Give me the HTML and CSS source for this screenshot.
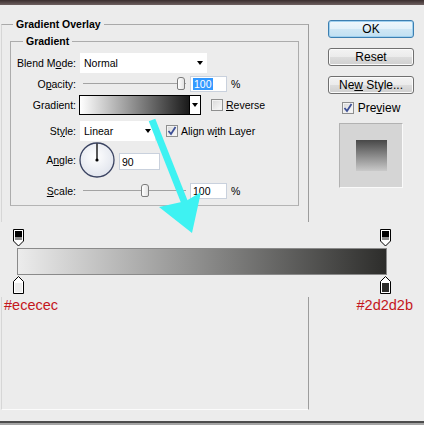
FILE: index.html
```html
<!DOCTYPE html>
<html>
<head>
<meta charset="utf-8">
<link rel="stylesheet" href="styles.css">
</head>
<body>
<div class="titlebar"></div>
<div class="dialog">
  <div class="main">
    <fieldset class="outer">
      <legend>Gradient Overlay</legend>
      <fieldset class="inner">
        <legend>Gradient</legend>
        <div class="row r1">
          <span class="lbl">Blend M<u>o</u>de:</span>
          <div class="select w-blend"><span>Normal</span><i class="caret"></i></div>
        </div>
        <div class="row r2">
          <span class="lbl">O<u>p</u>acity:</span>
          <div class="slider"><div class="thumb" style="margin-left:94px"></div></div>
          <div class="num"><span class="sel">100</span></div>
          <span class="pct">%</span>
        </div>
        <div class="row r3">
          <span class="lbl">Gradient:</span>
          <div class="gradsw"></div>
          <div class="ddbtn"><i class="caret"></i></div>
          <div class="cb cb-rev"></div>
          <span class="cbl"><u>R</u>everse</span>
        </div>
        <div class="row r4">
          <span class="lbl">St<u>y</u>le:</span>
          <div class="select w-style"><span>Linear</span><i class="caret"></i></div>
          <div class="cb cb-align"><svg width="10" height="10" viewBox="0 0 10 10"><path d="M1.5 5 L4 8 L8.5 1" fill="none" stroke="#3c4f96" stroke-width="1.8"/></svg></div>
          <span class="cbl">Align w<u>i</u>th Layer</span>
        </div>
        <div class="row r5">
          <span class="lbl lbl-angle">A<u>n</u>gle:</span>
          <svg class="dial" width="36" height="36" viewBox="0 0 36 36">
            <defs>
              <radialGradient id="dg" cx="45%" cy="40%" r="65%">
                <stop offset="0" stop-color="#ffffff"/>
                <stop offset="1" stop-color="#dfe3ec"/>
              </radialGradient>
            </defs>
            <circle cx="18" cy="18" r="17" fill="url(#dg)" stroke="#3b4462" stroke-width="1.3"/>
            <line x1="18" y1="18" x2="18" y2="1.5" stroke="#000" stroke-width="1.3"/>
            <circle cx="18" cy="18" r="1.6" fill="#000"/>
          </svg>
          <div class="num num-angle">90</div>
        </div>
        <div class="row r6">
          <span class="lbl"><u>S</u>cale:</span>
          <div class="slider"><div class="thumb" style="margin-left:58px"></div></div>
          <div class="num">100</div>
          <span class="pct">%</span>
        </div>
      </fieldset>
    </fieldset>
  </div>
  <div class="side">
    <div class="btn default">OK</div>
    <div class="btn">Reset</div>
    <div class="btn last">Ne<u>w</u> Style...</div>
    <div class="pvrow">
      <div class="cb"><svg width="10" height="10" viewBox="0 0 10 10"><path d="M1.5 5 L4 8 L8.5 1" fill="none" stroke="#3c4f96" stroke-width="1.8"/></svg></div>
      <span class="pvlbl">Pre<u>v</u>iew</span>
    </div>
    <div class="pvbox"><div class="pvsq"></div></div>
  </div>
</div>
<div class="bottombar"></div>

<div class="ge">
  <div class="ge-body">
    <div class="stops">
      <svg width="11" height="18" viewBox="0 0 11 18"><path d="M0.5 0.5 H10.5 V12 L5.5 17 L0.5 12 Z" fill="#fff" stroke="#000"/><rect x="2" y="2" width="7" height="6" fill="#000"/><rect x="2" y="8" width="7" height="3" fill="#8c8c8c"/></svg>
      <svg width="11" height="18" viewBox="0 0 11 18"><path d="M0.5 0.5 H10.5 V12 L5.5 17 L0.5 12 Z" fill="#fff" stroke="#000"/><rect x="2" y="2" width="7" height="6" fill="#000"/><rect x="2" y="8" width="7" height="3" fill="#8c8c8c"/></svg>
    </div>
    <div class="bar"></div>
    <div class="stops bottom">
      <svg width="11" height="18" viewBox="0 0 11 18"><path d="M5.5 0.5 L10.5 5.5 V17.5 H0.5 V5.5 Z" fill="#fff" stroke="#000"/><rect x="2" y="7" width="7" height="9" fill="#ececec"/></svg>
      <svg width="11" height="18" viewBox="0 0 11 18"><path d="M5.5 0.5 L10.5 5.5 V17.5 H0.5 V5.5 Z" fill="#fff" stroke="#000"/><rect x="2" y="7" width="7" height="9" fill="#2d2d2b"/></svg>
    </div>
  </div>
  <div class="ge-labels">
    <span>#ececec</span>
    <span>#2d2d2b</span>
  </div>
</div>

<svg class="arrow" width="424" height="425" viewBox="0 0 424 425">
  <line x1="152" y1="120" x2="186" y2="206" stroke="#3ef2f2" stroke-width="7"/>
  <polygon points="159,207 186,201 201,192 192,233" fill="#3ef2f2"/>
</svg>
</body>
</html>
```

FILE: styles.css
```css
* { box-sizing: border-box; }
html, body { margin: 0; padding: 0; }
body {
  width: 424px;
  height: 425px;
  overflow: hidden;
  position: relative;
  background: #ececec;
  font: 10.5px "Liberation Sans", Arial, sans-serif;
  color: #000;
}
u { text-decoration: underline; }

.titlebar {
  height: 5px;
  background: linear-gradient(#3a2e2e, #6e6060);
}
.dialog { display: flex; height: 416px; }
.main { width: 309px; padding-left: 1px; flex: none; }

fieldset {
  margin: 0;
  padding: 0;
  min-width: 0;
  border: 1px solid #a9a9a9;
}
legend {
  font-weight: bold;
  font-size: 10.5px;
  line-height: 12px;
  padding: 0 3px;
}
.outer {
  margin-top: 13px;
  width: 308px;
  height: 392px;
  border-color: #a9a9a9 #9c9c9c #fbfbfb #d6d6d6;
}
.outer > legend { margin-left: 11px; }
.inner {
  margin: 5px 0 0 8px;
  width: 289px;
  height: 171px;
  border-color: #acacac #acacac #b4b4b4 #acacac;
}
.inner > legend { margin-left: 12px; }

.row { display: flex; align-items: center; }
.lbl {
  width: 65px;
  margin-right: 4px;
  text-align: right;
  flex: none;
}
.r1 { margin-top: 6px; height: 20px; }
.r2 { margin-top: 2px; height: 17px; }
.r3 { margin-top: 3px; height: 20px; }
.r4 { margin-top: 6px; height: 20px; }
.r5 { height: 38px; align-items: flex-start; }
.r6 { margin-top: 3px; height: 17px; }

.select {
  height: 20px;
  background: #fff;
  display: flex;
  align-items: center;
  justify-content: space-between;
  padding: 0 4px 0 4px;
}
.w-blend { width: 127px; }
.w-style { width: 75px; }
.caret {
  display: block;
  width: 0;
  height: 0;
  border-left: 3.5px solid transparent;
  border-right: 3.5px solid transparent;
  border-top: 4px solid #000;
}

.slider {
  width: 103px;
  height: 17px;
  margin-left: 3px;
  margin-right: 4px;
  display: flex;
  align-items: center;
  background: linear-gradient(#a3a3a3, #a3a3a3) left center / 100% 1px no-repeat;
}
.thumb {
  width: 8px;
  height: 13px;
  border: 1px solid #7c7c7c;
  border-radius: 3px 3px 2px 2px;
  background: linear-gradient(90deg, #ffffff, #e2e2e2);
}
.num {
  width: 37px;
  height: 16px;
  background: #fff;
  border: 1px solid #c9d1dd;
  padding-left: 2px;
  display: flex;
  align-items: center;
  flex: none;
}
.sel { background: #3399ff; color: #fff; padding: 0 1px; }
.pct { margin-left: 4px; }

.gradsw {
  margin-left: -1px;
  width: 111px;
  height: 20px;
  border: 1px solid #000;
  background: linear-gradient(to right, #ffffff, #1a1a1a);
}
.ddbtn {
  width: 11px;
  height: 20px;
  border: 1px solid #000;
  border-left: 0;
  background: #fff;
  display: flex;
  align-items: center;
  justify-content: center;
}
.cb {
  width: 12px;
  height: 12px;
  border: 1px solid #8e8f8f;
  background: linear-gradient(135deg, #d8d8d8, #fbfbfb);
  box-shadow: inset 0 0 0 1px #f2f2f2;
  display: flex;
  align-items: center;
  justify-content: center;
  flex: none;
}
.cb-rev { margin-left: 10px; }
.cb-align { margin-left: 11px; }
.cbl { margin-left: 3px; }

.lbl-angle { align-self: center; }
.dial { margin: 1px 0 0 -1px; flex: none; }
.num-angle { width: 41px; height: 17px; margin: 12px 0 0 4px; }

.side {
  width: 86px;
  margin-left: 19px;
  padding-top: 15px;
  display: flex;
  flex-direction: column;
  align-items: center;
  flex: none;
}
.btn {
  width: 86px;
  height: 18px;
  margin-bottom: 10px;
  border: 1px solid #707070;
  border-radius: 3px;
  background: linear-gradient(#f3f3f3 0%, #ebebeb 50%, #dddddd 50%, #cfcfcf 100%);
  box-shadow: inset 0 0 0 1px #fbfbfb;
  font-size: 12px;
  line-height: 16px;
  text-align: center;
}
.btn.default {
  border-color: #3c7fb1;
  background: linear-gradient(#eef7fc 0%, #e2f1fa 50%, #cfe7f5 50%, #c1e0f2 100%);
  box-shadow: inset 0 0 0 1px #9fd0ef;
}
.btn.last { margin-bottom: 7px; }
.pvrow {
  height: 13px;
  display: flex;
  align-items: center;
}
.pvlbl { margin-left: 4px; font-size: 12px; }
.pvbox {
  margin-top: 9px;
  width: 64px;
  height: 65px;
  background: #d5d5d5;
  border: 1px solid;
  border-color: #b2b2b2 #fafafa #fafafa #b2b2b2;
  display: flex;
  align-items: center;
  justify-content: center;
}
.pvsq {
  width: 31px;
  height: 31px;
  background: linear-gradient(#484848, #c9c9c9);
}

.bottombar {
  height: 4px;
  border-top: 2px solid #4d4d4d;
  background: #a5a5a5;
}

.ge {
  position: absolute;
  left: 0;
  top: 222px;
  width: 424px;
}
.ge-body {
  height: 75px;
  background: #ececec;
  padding: 7px 0 0 13px;
}
.stops {
  width: 378px;
  height: 18px;
  display: flex;
  justify-content: space-between;
}
.stops svg { display: block; }
.stops.bottom { margin-top: 1px; }
.bar {
  margin: 1px 0 0 4px;
  width: 370px;
  height: 27px;
  border: 1px solid #8a8a8a;
  background: linear-gradient(to right, #ececec, #2d2d2b);
}
.ge-labels {
  display: flex;
  justify-content: space-between;
  padding: 0 11px 0 4px;
  font-size: 14.5px;
  line-height: 17px;
  color: #c4161c;
}

.arrow {
  position: absolute;
  left: 0;
  top: 0;
  pointer-events: none;
}
```
